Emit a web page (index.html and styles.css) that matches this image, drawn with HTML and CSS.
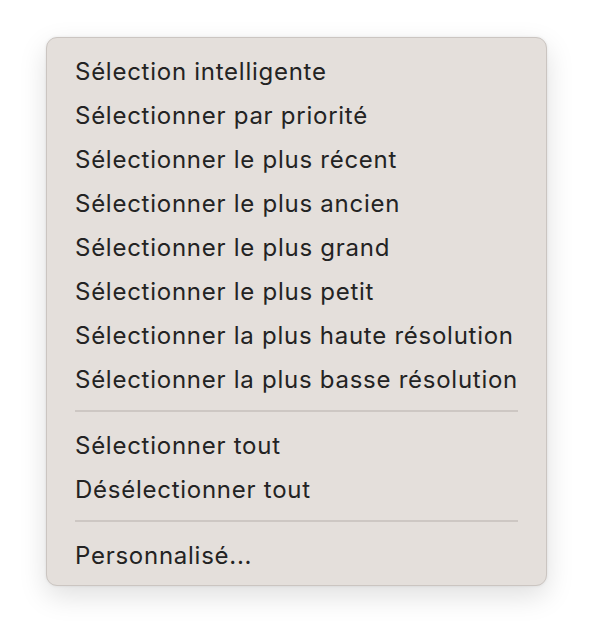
FILE: index.html
```html
<!DOCTYPE html>
<html lang="fr">
<head>
<meta charset="utf-8">
<link rel="stylesheet" href="styles.css">
</head>
<body>
<div class="menu">
  <div class="item">Sélection intelligente</div>
  <div class="item">Sélectionner par priorité</div>
  <div class="item">Sélectionner le plus récent</div>
  <div class="item">Sélectionner le plus ancien</div>
  <div class="item">Sélectionner le plus grand</div>
  <div class="item">Sélectionner le plus petit</div>
  <div class="item">Sélectionner la plus haute résolution</div>
  <div class="item">Sélectionner la plus basse résolution</div>
  <div class="sep"></div>
  <div class="item">Sélectionner tout</div>
  <div class="item">Désélectionner tout</div>
  <div class="sep"></div>
  <div class="item">Personnalisé...</div>
</div>
</body>
</html>
```
FILE: styles.css
```css
html, body {
  margin: 0;
  padding: 0;
  background: #ffffff;
}
body {
  width: 592px;
  height: 640px;
  font-family: Inter, "Noto Sans", sans-serif;
}
.menu {
  box-sizing: border-box;
  margin: 37px 0 0 46px;
  width: 501px;
  height: 549px;
  background: #e4dfdb;
  border: 1px solid #cbc5c1;
  border-radius: 11px;
  box-shadow: 0 10px 28px rgba(0, 0, 0, 0.13), 0 0 3px rgba(0,0,0,0.08);
  padding: 11px 28px 0 28px;
  display: flex;
  flex-direction: column;
}
.item {
  height: 44px;
  display: flex;
  align-items: center;
  font-size: 24px;
  color: #232323;
  letter-spacing: 0.74px;
  white-space: nowrap;
}
.sep {
  height: 2px;
  background: #cdc7c3;
  margin: 9px 0 11px 0;
}
```
